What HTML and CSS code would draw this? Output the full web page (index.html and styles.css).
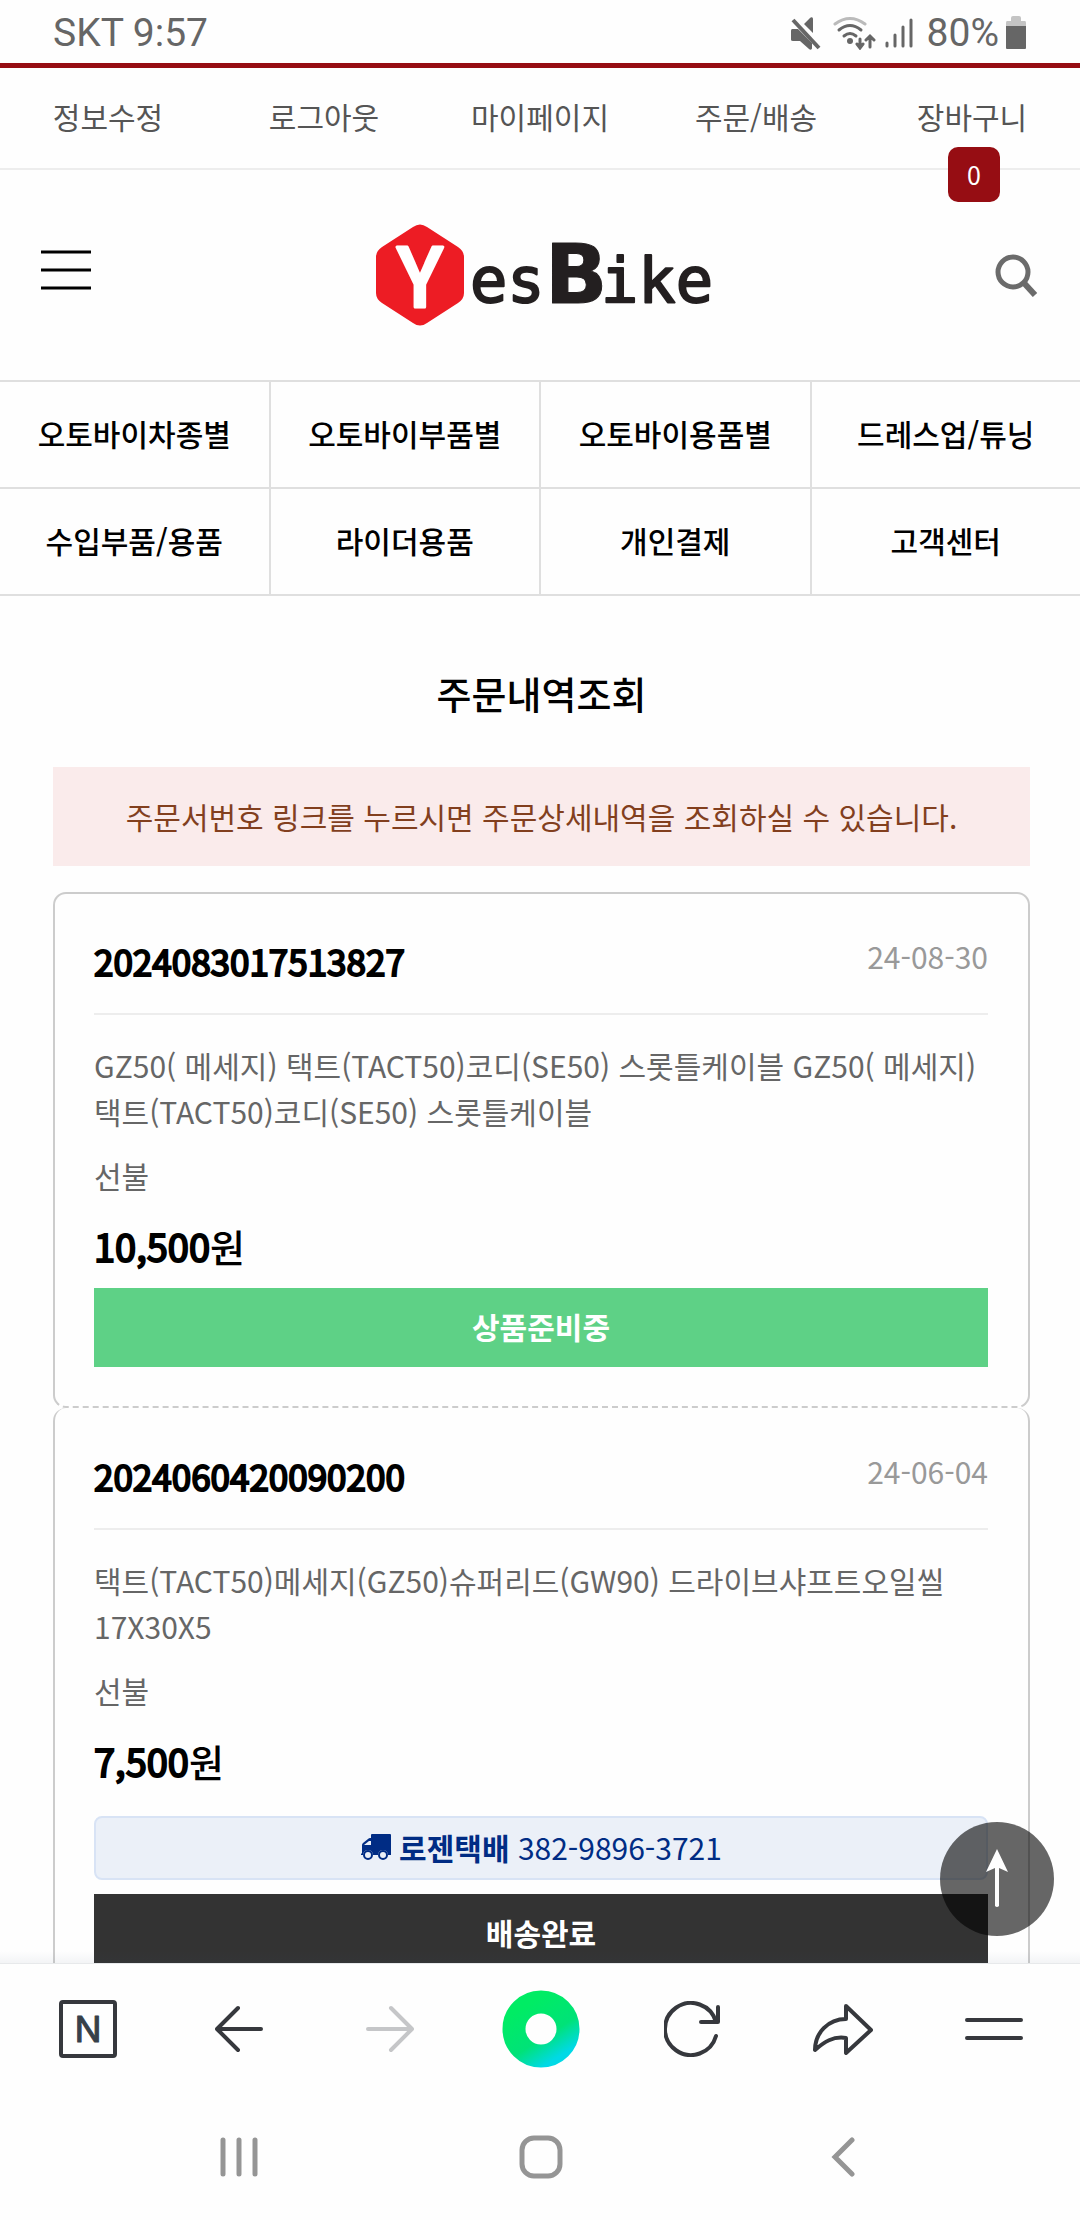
FILE: index.html
```html
<!DOCTYPE html>
<html lang="ko">
<head>
<meta charset="utf-8">
<meta name="viewport" content="width=device-width, initial-scale=1">
<title>주문내역조회 | YesBike</title>
<link rel="stylesheet" href="styles.css">
</head>
<body>
<div class="status">
  <span class="status-text">SKT 9:57</span>
  <div class="status-right">
    <svg class="ico-mute" width="32" height="34" viewBox="0 0 32 34"><path fill="#666" d="M3 13h5l8 8v0l6 6v5c0 2-2 2-3 1l-9-8H3c-2 0-2-1-2-2v-8c0-2 1-2 2-2zM14 8l6-6c1-1 3-1 3 1v14z"/><path d="M3 4l26 28" stroke="#666" stroke-width="4"/></svg>
    <svg class="ico-wifi" width="44" height="34" viewBox="0 0 44 34" fill="none" stroke="#666" stroke-width="3" stroke-linecap="round"><path stroke="#bbb" d="M3 8Q18-3 33 8"/><path d="M7 14Q18 5 29 14M12 20Q18 15 24 20"/><circle cx="18" cy="25" r="3" fill="#666" stroke="none"/><path d="M28 23v8M25 28l3 4 3-4M38 31v-9M34 24l4-4 4 4"/></svg>
    <svg class="ico-signal" width="28" height="32" viewBox="0 0 28 32" stroke="#666" stroke-width="3" stroke-linecap="round"><path d="M2 26v3M10 18v11M18 10v19M26 3v26"/></svg>
    <span class="status-text">80%</span>
    <svg class="ico-battery" width="22" height="34" viewBox="0 0 22 34"><path fill="#c4c4c4" d="M6 2q0-2 2-2h6q2 0 2 2v3h4q1 0 1 2v4H1V7q0-2 1-2h4z"/><path fill="#666" d="M1 10h20v22q0 1-1 1H2q-1 0-1-1z"/></svg>
  </div>
</div>

<div class="view">
  <main class="page">
    <nav class="user-nav">
      <a href="#">정보수정</a>
      <a href="#">로그아웃</a>
      <a href="#">마이페이지</a>
      <a href="#">주문/배송</a>
      <a href="#">장바구니<span class="badge">0</span></a>
    </nav>

    <header class="brand">
      <button class="menu-btn" aria-label="메뉴"><svg width="50" height="40" viewBox="0 0 50 40" stroke="#000" stroke-width="3"><path d="M0 2h50M0 20h50M0 38h50"/></svg></button>
      <a class="logo" href="#" aria-label="YesBike">
        <svg width="336" height="102" viewBox="0 0 336 102">
          <path fill="#ed1c24" d="M38 3q7-5 14 0l31 20q6 4 6 10v36q0 6-6 10L52 99q-7 5-14 0L7 79q-6-4-6-10V33q0-6 6-10z"/>
          <text class="logo-y" x="45" y="83" text-anchor="middle">Y</text>
          <g class="logo-word"><text x="95" y="78">es</text><text class="logo-b" x="170" y="79">B</text><text x="226" y="78">ike</text></g>
        </svg>
      </a>
      <button aria-label="검색"><svg width="44" height="44" viewBox="0 0 44 44" fill="none" stroke="#6b6b6b"><circle cx="19" cy="19" r="15" stroke-width="5"/><path d="M30 30l11 12" stroke-width="6"/></svg></button>
    </header>

    <nav class="categories">
      <a href="#">오토바이차종별</a>
      <a href="#">오토바이부품별</a>
      <a href="#">오토바이용품별</a>
      <a href="#">드레스업/튜닝</a>
      <a href="#">수입부품/용품</a>
      <a href="#">라이더용품</a>
      <a href="#">개인결제</a>
      <a href="#">고객센터</a>
    </nav>

    <section class="orders">
      <h1>주문내역조회</h1>
      <p class="notice">주문서번호 링크를 누르시면 주문상세내역을 조회하실 수 있습니다.</p>

      <article class="order">
        <div class="order-head"><a class="order-no" href="#">2024083017513827</a><time class="order-date">24-08-30</time></div>
        <p class="order-item">GZ50( 메세지) 택트(TACT50)코디(SE50) 스롯틀케이블 GZ50( 메세지) 택트(TACT50)코디(SE50) 스롯틀케이블</p>
        <p class="order-fee">선불</p>
        <p class="order-price"><span class="num">10,500</span>원</p>
        <p class="state ready">상품준비중</p>
      </article>

      <article class="order">
        <div class="order-head"><a class="order-no" href="#">2024060420090200</a><time class="order-date">24-06-04</time></div>
        <p class="order-item">택트(TACT50)메세지(GZ50)슈퍼리드(GW90) 드라이브샤프트오일씰 17X30X5</p>
        <p class="order-fee">선불</p>
        <p class="order-price"><span class="num">7,500</span>원</p>
        <a class="tracking" href="#">
          <svg width="32" height="26" viewBox="0 0 32 26"><path fill="#002c84" d="M12 0h18q1 0 1 1v20h-3a5 5 0 0 0-10 0h-5a5 5 0 0 0-10 0H1v-1l1-1v-8q0-1 1-2l5-4q1-1 2-1h1V1q0-1 1-1zM4 11h7V7H9z" fill-rule="evenodd"/><circle cx="8" cy="21" r="4" fill="none" stroke="#002c84" stroke-width="2"/><circle cx="23" cy="21" r="4" fill="none" stroke="#002c84" stroke-width="2"/></svg>
          <span><b>로젠택배</b> 382-9896-3721</span>
        </a>
        <p class="state done">배송완료</p>
      </article>
    </section>
  </main>
  <button class="to-top" aria-label="맨 위로"><svg width="24" height="60" viewBox="0 0 24 60"><path fill="#fff" d="M12 0l11 23-9-4v38q-2 2-4 0V19l-9 4z"/></svg></button>
</div>

<footer class="bottom">
  <div class="toolbar">
    <button aria-label="네이버 홈"><svg width="60" height="60" viewBox="0 0 60 60"><rect x="3" y="3" width="54" height="54" rx="2" fill="none" stroke="#36383d" stroke-width="4"/><text class="naver" x="30" y="43" text-anchor="middle">N</text></svg></button>
    <button aria-label="뒤로"><svg class="line" width="48" height="48" viewBox="0 0 48 48"><path d="M46 24H3M23 3L2 24l21 21"/></svg></button>
    <button aria-label="앞으로" disabled><svg class="line off" width="48" height="48" viewBox="0 0 48 48"><path d="M2 24h43M25 3l21 21-21 21"/></svg></button>
    <button aria-label="그린닷"><svg width="78" height="78" viewBox="0 0 78 78"><defs><linearGradient id="dot" x1=".25" y1=".05" x2=".85" y2="1"><stop offset="0" stop-color="#00ec64"/><stop offset=".6" stop-color="#00e278"/><stop offset="1" stop-color="#00d9e6"/></linearGradient></defs><circle cx="39" cy="39" r="27" fill="none" stroke="url(#dot)" stroke-width="23"/></svg></button>
    <button aria-label="새로고침"><svg class="line" width="56" height="56" viewBox="0 0 56 56"><path d="M52 35A26 26 0 1 1 52 21M54 6v15H37"/></svg></button>
    <button aria-label="공유"><svg class="line" width="60" height="52" viewBox="0 0 60 52"><path d="M33 3l25 24-25 23V35C20 33 11 39 2 47 2 30 15 16 33 16z"/></svg></button>
    <button aria-label="더보기"><svg class="line" width="58" height="24" viewBox="0 0 58 24"><path d="M2 3h54M2 21h54"/></svg></button>
  </div>
  <div class="system">
    <button aria-label="최근 앱"><svg class="sys" width="38" height="40" viewBox="0 0 38 40"><path d="M3 3v34M19 3v34M35 3v34"/></svg></button>
    <button aria-label="홈"><svg class="sys" width="44" height="44" viewBox="0 0 44 44"><rect x="3" y="3" width="38" height="38" rx="12"/></svg></button>
    <button aria-label="이전"><svg class="sys" width="24" height="40" viewBox="0 0 24 40"><path d="M21 3L4 20l17 17"/></svg></button>
  </div>
</footer>
</body>
</html>
```
FILE: styles.css
```css
* { box-sizing: border-box; }

body {
  margin: 0;
  height: 100vh;
  display: flex;
  flex-direction: column;
  background: #fefefe;
  color: #000;
  font-family: "Noto Sans CJK KR", "Noto Sans", sans-serif;
  font-size: 30px;
  line-height: 46px;
}

a { color: inherit; text-decoration: none; }
p, h1 { margin: 0; }
svg { display: block; flex: none; }

button {
  display: flex;
  align-items: center;
  justify-content: center;
  padding: 0;
  border: 0;
  background: none;
}

/* device status bar */
.status {
  flex: none;
  display: flex;
  justify-content: space-between;
  align-items: center;
  height: 63px;
  padding: 3px 53px 0;
  color: #666;
  font-family: Roboto, sans-serif;
}
.status-text { font-size: 39px; line-height: 46px; }
.status-right { display: flex; align-items: center; }
.ico-wifi { margin-left: 10px; }
.ico-signal { margin: 0 14px 0 9px; }
.ico-battery { margin-left: 6px; }

/* scrolled web page */
.view {
  position: relative;
  flex: 1;
  min-height: 0;
}
.view::after {
  content: "";
  position: absolute;
  inset: auto 0 0;
  height: 12px;
  background: linear-gradient(rgba(60, 80, 110, 0), rgba(60, 80, 110, .06));
}
.page { height: 100%; overflow: hidden; }

.user-nav {
  display: grid;
  grid-template-columns: repeat(5, 1fr);
  border-top: 5px solid #960d13;
  border-bottom: 2px solid #ededed;
  color: #555;
  text-align: center;
}
.user-nav a { position: relative; padding: 25px 0 29px; }
.badge {
  position: absolute;
  top: 79px;
  left: 50%;
  width: 52px;
  margin-left: -24px;
  border-radius: 10px;
  background: #960d13;
  color: #fff;
  font-size: 25px;
  line-height: 55px;
}

.brand {
  display: flex;
  align-items: center;
  justify-content: space-between;
  height: 210px;
  padding: 0 42px 0 41px;
}
.menu-btn { padding-bottom: 10px; }
.logo svg { overflow: visible; }
.logo-y {
  fill: #fff;
  stroke: #fff;
  stroke-width: 3px;
  stroke-linejoin: round;
  font-size: 82px;
  font-weight: 500;
}
.logo-word {
  fill: #231f20;
  stroke: #231f20;
  stroke-width: 2px;
  stroke-linejoin: round;
  font-family: "DejaVu Sans Mono", monospace;
  font-size: 62px;
}
.logo-b {
  stroke-width: 1px;
  font-family: "DejaVu Sans", sans-serif;
  font-size: 82px;
  font-weight: 700;
}

.categories {
  display: grid;
  grid-template-columns: repeat(4, 1fr);
  gap: 2px;
  border: solid #dfdfdf;
  border-width: 2px 0;
  background: #dfdfdf;
  font-weight: 500;
  text-align: center;
}
.categories a {
  padding-bottom: 2px;
  background: #fefefe;
  line-height: 103px;
}

/* order list */
.orders { padding: 69px 50px 0 53px; }
h1 {
  margin-bottom: 46px;
  font-size: 38px;
  font-weight: 500;
  line-height: 56px;
  text-align: center;
}
.notice {
  margin-bottom: 26px;
  padding: 26px 0 27px;
  background: #faebeb;
  color: #823f1e;
  text-align: center;
}
.order {
  padding: 39px 40px 39px 39px;
  border: 2px solid #ccc;
  border-bottom-style: dashed;
  border-radius: 13px;
}
.order + .order { padding-top: 40px; border-top: 0; }
.order-head {
  display: flex;
  justify-content: space-between;
  align-items: flex-start;
  margin-bottom: 27px;
  padding-bottom: 24px;
  border-bottom: 2px solid #ededed;
}
.order-no {
  font-size: 35px;
  line-height: 56px;
  -webkit-text-stroke: 2px #000;
}
.order-date { color: #999; }
.order-item, .order-fee { color: #666; }
.order-fee { margin: 18px 0 20px; }
.order-price {
  margin-bottom: 14px;
  font-size: 38px;
  font-weight: 500;
  line-height: 56px;
}
.num { font-weight: 400; -webkit-text-stroke: 2px #000; }
.state {
  padding-bottom: 2px;
  color: #fff;
  font-weight: 700;
  line-height: 77px;
  text-align: center;
}
.ready { background: #5ed186; }
.done { background: #333; }
.tracking {
  display: flex;
  justify-content: center;
  align-items: center;
  gap: 7px;
  margin: 27px 0 14px;
  padding: 6px 0 8px;
  border: 2px solid #d8e3f5;
  border-radius: 8px;
  background: #ebf0f8;
  color: #002c84;
}

.to-top {
  position: absolute;
  right: 26px;
  bottom: 27px;
  width: 114px;
  height: 114px;
  border-radius: 50%;
  background: rgba(0, 0, 0, .6);
}

/* browser toolbar and system navigation */
.bottom {
  flex: none;
  border-top: 1px solid #e7e9eb;
  background: #fefefe;
}
.toolbar {
  display: grid;
  grid-template-columns: repeat(7, 1fr);
  height: 130px;
  padding: 0 11px 0 13px;
}
.system {
  display: grid;
  grid-template-columns: repeat(3, 1fr);
  height: 126px;
  padding: 0 86px 0 88px;
}
.line {
  fill: none;
  stroke: #36383d;
  stroke-width: 4px;
  stroke-linecap: round;
  stroke-linejoin: round;
}
.off { stroke: #c5c6c8; }
.sys {
  fill: none;
  stroke: #959595;
  stroke-width: 5px;
  stroke-linecap: round;
}
.naver {
  fill: #364049;
  stroke: #364049;
  stroke-linejoin: round;
  font-family: Inter, sans-serif;
  font-size: 36px;
  font-weight: 400;
}
```
